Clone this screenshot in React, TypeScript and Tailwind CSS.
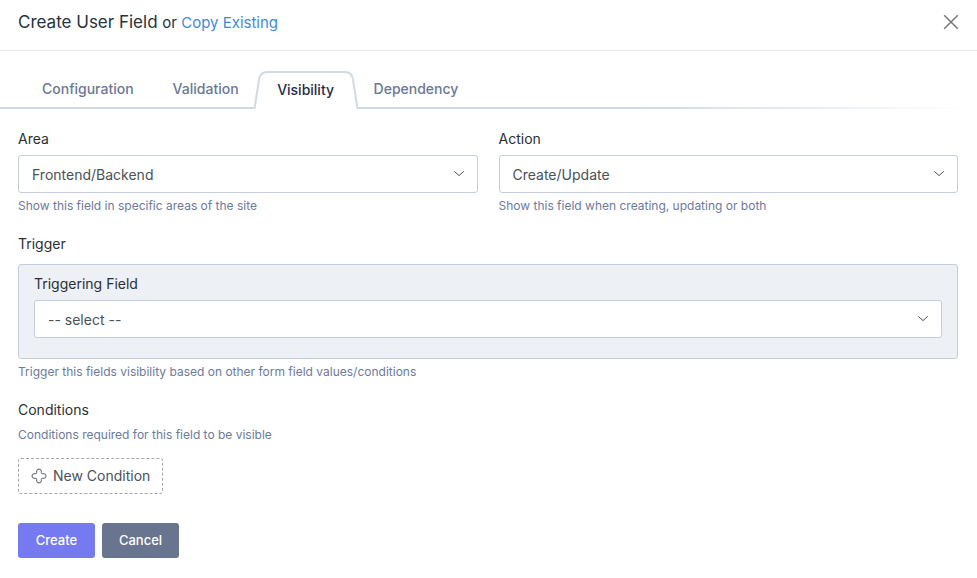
import { useState } from 'react';
import type { ReactNode } from 'react';

function Chevron() {
  return (
    <svg
      viewBox="0 0 12 12"
      className="pointer-events-none absolute top-1/2 right-3 size-3 -translate-y-1/2"
      fill="none"
      stroke="#4d545c"
      strokeWidth="1"
      strokeLinecap="round"
      strokeLinejoin="round"
      aria-hidden="true"
    >
      <path d="M0.500 3.600 5 7.600l4.500-4" />
    </svg>
  );
}

type SelectFieldProps = { id: string; label: string; options: string[]; help?: string };

function SelectField({ id, label, options, help }: SelectFieldProps) {
  return (
    <div>
      <label htmlFor={id} className="block text-sm leading-5 text-[#2b2f36]">
        {label}
      </label>
      <div className="relative mt-[6px]">
        <select
          id={id}
          className="block h-[38px] w-full appearance-none rounded-[3px] border border-[#c5cddd] bg-white pt-0.5 pr-9 pl-[13px] text-sm text-[#4a5157] outline-none"
        >
          {options.map((option) => (
            <option key={option}>{option}</option>
          ))}
        </select>
        <Chevron />
      </div>
      {help && <Help>{help}</Help>}
    </div>
  );
}

function Help({ children }: { children: ReactNode }) {
  return <p className="mt-[5px] text-xs leading-4 text-[#6d7a9c]">{children}</p>;
}

export default function App() {
  const [active] = useState('Visibility');
  const line = 'border-b-2 border-[#d0dbe6]';

  return (
    <main className="bg-white pb-5 font-['Inter',sans-serif] text-sm text-[#2b2f36]">
      <header className="flex h-[51px] items-center justify-between border-b border-[#e4e7ea] px-[18px] pb-1.5">
        <h1 className="text-[17px] leading-7 text-[#263342]">
          Create User Field{' '}
          <span className="text-[15px]">
            or{' '}
            <a href="#copy" className="text-[#4289da]">
              Copy Existing
            </a>
          </span>
        </h1>
        <button type="button" aria-label="Close">
          <svg viewBox="0 0 16 16" className="size-4" fill="none" stroke="#777" strokeWidth="1.5" aria-hidden="true">
            <path d="M1.2 1.2 14.8 14.8M14.8 1.2 1.2 14.8" />
          </svg>
        </button>
      </header>

      <div role="tablist" className="mt-5 flex h-[38px] items-end font-medium text-[#6a7797]">
        <button role="tab" aria-selected={active === 'Configuration'} className={`h-full pr-[19px] pl-[42px] ${line}`}>
          Configuration
        </button>
        <button role="tab" aria-selected={active === 'Validation'} className={`h-full pr-[15px] pl-5 ${line}`}>
          Validation
        </button>
        <button role="tab" aria-selected={active === 'Visibility'} className="relative h-full w-[104px] text-[#262c48]">
          <svg
            viewBox="0 0 104 38"
            className="absolute inset-0 h-full w-full"
            fill="none"
            stroke="#d0dbe6"
            strokeWidth="2"
            aria-hidden="true"
          >
            <path d="M0 37h.6L5 8.500Q6.200 1 13 1H91Q97.800 1 99 8.500L103.400 37H104" />
          </svg>
          <span className="relative">Visibility</span>
        </button>
        <button role="tab" aria-selected={active === 'Dependency'} className={`h-full px-4 ${line}`}>
          Dependency
        </button>
        <div className="mr-[10px] h-[2px] flex-1 bg-linear-to-r from-[#d0dbe6] from-35% to-transparent" />
      </div>

      <form className="pt-5 pr-[19px] pl-[18px]" onSubmit={(event) => event.preventDefault()}>
        <div className="grid grid-cols-2 gap-[21px]">
          <SelectField
            id="area"
            label="Area"
            options={['Frontend/Backend', 'Frontend', 'Backend']}
            help="Show this field in specific areas of the site"
          />
          <SelectField
            id="action"
            label="Action"
            options={['Create/Update', 'Create', 'Update']}
            help="Show this field when creating, updating or both"
          />
        </div>

        <section className="mt-5">
          <h2 className="leading-5">Trigger</h2>
          <div className="mt-[10px] rounded-[3px] border border-[#c5cddd] bg-[#edf0f5] px-[15px] pt-[9px] pb-5">
            <SelectField id="trigger" label="Triggering Field" options={['-- select --']} />
          </div>
          <Help>Trigger this fields visibility based on other form field values/conditions</Help>
        </section>

        <section className="mt-5">
          <h2 className="leading-5">Conditions</h2>
          <div className="pt-[2px]">
            <Help>Conditions required for this field to be visible</Help>
          </div>
          <button
            type="button"
            className="mt-[15px] flex h-9 items-center gap-1.5 rounded-[3px] border border-dashed border-[#a5a8ab] px-3 text-[#4a5157]"
          >
            <svg viewBox="0 0 16 16" className="size-4" fill="none" stroke="#5a6066" strokeWidth="1" aria-hidden="true">
              <path d="M5.700 4.700V3Q5.700 1 8 1T10.300 3V4.700Q10.300 5.700 11.300 5.700H13Q15 5.700 15 8T13 10.300H11.300Q10.300 10.300 10.300 11.300V13Q10.300 15 8 15T5.700 13V11.300Q5.700 10.300 4.700 10.300H3Q1 10.300 1 8T3 5.700H4.700Q5.700 5.700 5.700 4.700Z" />
            </svg>
            New Condition
          </button>
        </section>

        <div className="mt-[29px] flex gap-[7px] text-[13px] font-medium text-white">
          <button type="submit" className="h-[35px] min-w-[77px] rounded-[3px] bg-[#757af0] px-4">
            Create
          </button>
          <button type="button" className="h-[35px] min-w-[77px] rounded-[3px] bg-[#69748f] px-4">
            Cancel
          </button>
        </div>
      </form>
    </main>
  );
}
